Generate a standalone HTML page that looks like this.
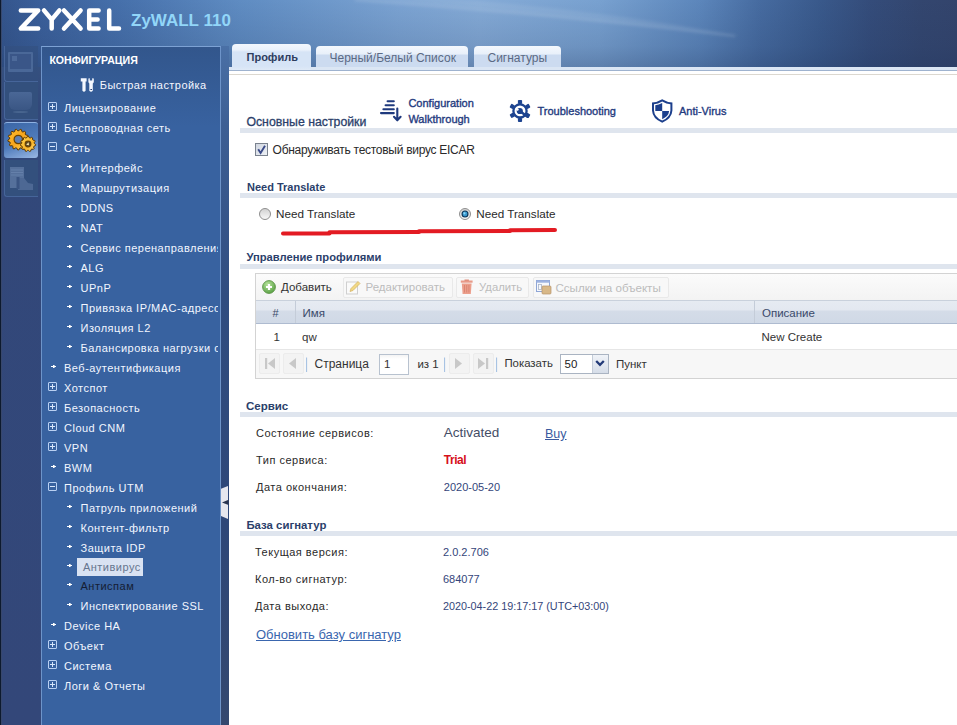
<!DOCTYPE html><html><head><meta charset='utf-8'><style>
*{margin:0;padding:0;box-sizing:border-box}
html,body{width:957px;height:725px;overflow:hidden;background:#fff;font-family:"Liberation Sans",sans-serif}
.a{position:absolute}
.t{position:absolute;line-height:1;white-space:nowrap}
</style></head><body>
<div class="a" style="left:0;top:0;width:957px;height:67px;background:linear-gradient(90deg,#34558c 0px,#3a5f9a 40px,#4670ab 120px,#5f8cc2 240px,#7ba3d2 400px,#84aad6 480px,#78a1d0 600px,#5c86bb 700px,#466ba0 760px,#39598b 820px,#344c7a 870px,#33466f 920px,#33446c 957px)"></div>
<div class="a" style="left:0;top:0;width:957px;height:67px;background:linear-gradient(180deg,rgba(30,50,90,0) 0px,rgba(30,50,90,0.06) 20px,rgba(30,50,90,0.14) 46px,rgba(30,50,90,0.3) 67px)"></div>
<svg class="a" style="left:0;top:0" width="957" height="67"><defs><filter id="bl"><feGaussianBlur stdDeviation="1.5"/></filter></defs><path d="M350 -2Q540 12 740 36Q590 8 440 -2Z" fill="rgba(255,255,255,0.08)" filter="url(#bl)"/><path d="M355 0Q540 13 735 36" stroke="rgba(255,255,255,0.12)" stroke-width="2.5" fill="none" filter="url(#bl)"/></svg>
<svg class="a" style="left:0;top:0" width="130" height="40" viewBox="0 0 130 40">
<g fill="none" stroke="#fff" stroke-width="4.5" stroke-linecap="round" stroke-linejoin="round">
<path d="M20.8 10.4H38.2L20.8 28.6H38.2"/>
<path d="M44 10.4L51.7 19.6L59.4 10.4M51.7 19.6V28.6"/>
<path d="M64 10.4L80.6 28.6M64 28.6L80.6 10.4"/>
<path d="M98.6 10.4H89.2V28.6H98.6M89.2 19.5H97.6"/>
<path d="M109.2 10.4V28.6H119"/>
</g></svg>
<div class="t" style="left:131px;top:12px;font-size:17px;color:#92d6f8;font-weight:bold;">ZyWALL 110</div>

<div class="a" style="left:0;top:67px;width:41px;height:658px;background:linear-gradient(180deg,#35507f 0px,#32487a 40px,#334779 100%)"></div>
<div class="a" style="left:0;top:0;width:1px;height:725px;background:#0d1a2e"></div><div class="a" style="left:1px;top:0;width:1px;height:725px;background:rgba(58,72,104,0.85)"></div>
<div class="a" style="left:4px;top:46px;width:34px;height:36px;background:rgba(52,80,127,0.6);border-left:1px solid #46659a;border-bottom:1px solid #46659a;border-radius:0 0 0 3px"></div>
<div class="a" style="left:8px;top:52px;width:25px;height:20px;border:2px solid #4a6898;border-bottom-width:3px;border-radius:1px;background:#3a5688"></div><div class="a" style="left:12px;top:56px;width:5px;height:5px;background:#4d6a9a"></div>
<div class="a" style="left:4px;top:82px;width:34px;height:38px;background:#33507d;border-left:1px solid #46659a;border-bottom:1px solid #46659a;border-radius:0 0 0 3px"></div>
<div class="a" style="left:9px;top:92px;width:23px;height:18px;border-radius:2px 2px 6px 6px;background:linear-gradient(180deg,#4a6796,#3a5684)"></div><div class="a" style="left:13px;top:111px;width:15px;height:2px;border-radius:50%;background:#48658f"></div>
<div class="a" style="left:4px;top:122px;width:34px;height:36px;border-radius:3px 3px 3px 3px;border-top:1px solid #8fb2e2;background:linear-gradient(160deg,#3b66a6 0%,#4f7bbb 55%,#9ab8e4 100%)"></div>
<svg class="a" style="left:0;top:115px" width="41" height="45" viewBox="0 115 41 45"><defs><linearGradient id="gg1" x1="0" y1="0" x2="1" y2="1"><stop offset="0" stop-color="#ffc030"/><stop offset="0.5" stop-color="#f7a51c"/><stop offset="1" stop-color="#ffd75a"/></linearGradient><linearGradient id="gg2" x1="0" y1="0" x2="1" y2="1"><stop offset="0" stop-color="#ffd24a"/><stop offset="0.6" stop-color="#f9b42a"/><stop offset="1" stop-color="#ffe07a"/></linearGradient></defs><path d="M28.68 140.13 L28.53 141.37 L26.64 142.10 L26.27 143.09 L27.20 144.88 L26.49 145.91 L24.48 145.68 L23.69 146.38 L23.68 148.40 L22.57 148.98 L20.90 147.84 L19.87 148.09 L18.93 149.88 L17.67 149.88 L16.73 148.09 L15.70 147.84 L14.03 148.98 L12.92 148.40 L12.91 146.38 L12.12 145.68 L10.11 145.91 L9.40 144.88 L10.33 143.09 L9.96 142.10 L8.07 141.37 L7.92 140.13 L9.58 138.97 L9.71 137.93 L8.37 136.41 L8.82 135.23 L10.82 134.98 L11.42 134.11 L10.95 132.15 L11.89 131.31 L13.78 132.02 L14.71 131.53 L15.21 129.57 L16.43 129.27 L17.77 130.78 L18.83 130.78 L20.17 129.27 L21.39 129.57 L21.89 131.53 L22.82 132.02 L24.71 131.31 L25.65 132.15 L25.18 134.11 L25.78 134.98 L27.78 135.23 L28.23 136.41 L26.89 137.93 L27.02 138.97Z" fill="url(#gg1)" stroke="#5a3600" stroke-width="1" stroke-linejoin="round"/><circle cx="18.3" cy="139.5" r="4.2" fill="#5f80b4" stroke="#6a4200" stroke-width="1.2"/><path d="M35.58 144.54 L35.43 145.62 L33.98 146.23 L33.60 147.06 L34.08 148.55 L33.37 149.37 L31.83 149.11 L31.06 149.60 L30.66 151.12 L29.62 151.43 L28.46 150.37 L27.54 150.37 L26.38 151.43 L25.34 151.12 L24.94 149.60 L24.17 149.11 L22.63 149.37 L21.92 148.55 L22.40 147.06 L22.02 146.23 L20.57 145.62 L20.42 144.54 L21.63 143.54 L21.76 142.64 L20.88 141.34 L21.33 140.36 L22.89 140.17 L23.49 139.49 L23.45 137.92 L24.36 137.33 L25.77 138.02 L26.64 137.76 L27.46 136.42 L28.54 136.42 L29.36 137.76 L30.23 138.02 L31.64 137.33 L32.55 137.92 L32.51 139.49 L33.11 140.17 L34.67 140.36 L35.12 141.34 L34.24 142.64 L34.37 143.54Z" fill="url(#gg2)" stroke="#5a3600" stroke-width="1" stroke-linejoin="round"/><circle cx="28" cy="144" r="2.8" fill="#5a4a30" stroke="#6a4200" stroke-width="1.2"/><path d="M26.2 144.8L28.6 142.2L29 145.3Z" fill="#ffe9a0"/></svg>
<div class="a" style="left:4px;top:160px;width:34px;height:37px;background:#33507d;border-left:1px solid #46659a;border-bottom:1px solid #46659a;border-radius:0 0 0 3px"></div>
<svg class="a" style="left:0;top:156px" width="41" height="44" viewBox="0 156 41 44"><rect x="10" y="167" width="14" height="21" fill="#55709b"/><path d="M11 170H23M11 172.5H23M11 175H23" stroke="#6580aa" stroke-width="1"/><path d="M18 178L24 178L28 183L33 184V190H18Z" fill="#4d6894"/><rect x="16.5" y="177" width="3" height="12" fill="#3a5482"/></svg>
<div class="a" style="left:41px;top:46px;width:180px;height:679px;background:linear-gradient(180deg,#32568c 0px,#355c96 40px,#3862a0 80px,#3862a0 100%);border:1px solid #6e94c9;border-top-color:#7da2d4;border-bottom:none"></div>
<div class="a" style="left:221px;top:46px;width:8px;height:679px;background:linear-gradient(180deg,#4a70a6 0px,#3d5f94 80px,#304d80 250px,#2e4778 480px,#34486f 100%)"></div>
<svg class="a" style="left:220px;top:484px" width="10" height="38" viewBox="220 484 10 38"><path d="M221 488.7L228 486V519L221 516Z" fill="#e6e7ee"/><path d="M222 502.4L228.5 499.8V505Z" fill="#2a3550"/></svg>
<div class="t" style="left:49.4px;top:55px;font-size:10.6px;color:#ffffff;font-weight:bold;">КОНФИГУРАЦИЯ</div>

<svg class="a" style="left:79px;top:77px" width="17" height="17" viewBox="79 77 17 17"><g fill="#f4f8ff"><path d="M80.8 78.2H86.6V81.6H85.6V90.8Q84 92.6 82.4 90.8V81.6H80.8Z"/><path d="M88.4 78.4L89.8 78.2V80.6H92.2V78.2L93.8 78.4V82.2L92.8 83.4V90.8Q91 92.6 89.3 90.8V83.4L88.4 82.2Z"/></g><rect x="90.4" y="89" width="1.6" height="1" fill="#2a4478"/></svg>
<div class="t" style="left:99.8px;top:80px;font-size:11px;color:#f4f7ff;letter-spacing:0.45px">Быстрая настройка</div>

<div class="a" style="left:42px;top:95px;width:176px;height:630px;overflow:hidden">
<div class="a" style="left:6px;top:7px;width:9px;height:9px;border:1px solid #b9d0f2;border-radius:1px"></div>
<div class="a" style="left:8px;top:11px;width:5px;height:1px;background:#d8e6fa"></div>
<div class="a" style="left:10px;top:9px;width:1px;height:5px;background:#d8e6fa"></div>
<div class="t" style="left:22px;top:8px;font-size:11px;color:#f2f6ff;letter-spacing:0.5px">Лицензирование</div>

<div class="a" style="left:6px;top:27px;width:9px;height:9px;border:1px solid #b9d0f2;border-radius:1px"></div>
<div class="a" style="left:8px;top:31px;width:5px;height:1px;background:#d8e6fa"></div>
<div class="a" style="left:10px;top:29px;width:1px;height:5px;background:#d8e6fa"></div>
<div class="t" style="left:22px;top:28px;font-size:11px;color:#f2f6ff;letter-spacing:0.5px">Беспроводная сеть</div>

<div class="a" style="left:6px;top:47px;width:9px;height:9px;border:1px solid #b9d0f2;border-radius:1px"></div>
<div class="a" style="left:8px;top:51px;width:5px;height:1px;background:#d8e6fa"></div>
<div class="t" style="left:22px;top:48px;font-size:11px;color:#f2f6ff;letter-spacing:0.5px">Сеть</div>

<svg class="a" style="left:25px;top:69px" width="6" height="5" viewBox="0 0 6 5"><rect x="0" y="2" width="5" height="1" fill="#fff"/><rect x="2" y="1" width="1" height="3" fill="#fff"/><rect x="3" y="1" width="1" height="1" fill="rgba(255,255,255,.6)"/><rect x="3" y="3" width="1" height="1" fill="rgba(255,255,255,.6)"/></svg>
<div class="t" style="left:38.5px;top:68px;font-size:11px;color:#f2f6ff;letter-spacing:0.5px">Интерфейс</div>

<svg class="a" style="left:25px;top:89px" width="6" height="5" viewBox="0 0 6 5"><rect x="0" y="2" width="5" height="1" fill="#fff"/><rect x="2" y="1" width="1" height="3" fill="#fff"/><rect x="3" y="1" width="1" height="1" fill="rgba(255,255,255,.6)"/><rect x="3" y="3" width="1" height="1" fill="rgba(255,255,255,.6)"/></svg>
<div class="t" style="left:38.5px;top:88px;font-size:11px;color:#f2f6ff;letter-spacing:0.5px">Маршрутизация</div>

<svg class="a" style="left:25px;top:109px" width="6" height="5" viewBox="0 0 6 5"><rect x="0" y="2" width="5" height="1" fill="#fff"/><rect x="2" y="1" width="1" height="3" fill="#fff"/><rect x="3" y="1" width="1" height="1" fill="rgba(255,255,255,.6)"/><rect x="3" y="3" width="1" height="1" fill="rgba(255,255,255,.6)"/></svg>
<div class="t" style="left:38.5px;top:108px;font-size:11px;color:#f2f6ff;letter-spacing:0.5px">DDNS</div>

<svg class="a" style="left:25px;top:129px" width="6" height="5" viewBox="0 0 6 5"><rect x="0" y="2" width="5" height="1" fill="#fff"/><rect x="2" y="1" width="1" height="3" fill="#fff"/><rect x="3" y="1" width="1" height="1" fill="rgba(255,255,255,.6)"/><rect x="3" y="3" width="1" height="1" fill="rgba(255,255,255,.6)"/></svg>
<div class="t" style="left:38.5px;top:128px;font-size:11px;color:#f2f6ff;letter-spacing:0.5px">NAT</div>

<svg class="a" style="left:25px;top:149px" width="6" height="5" viewBox="0 0 6 5"><rect x="0" y="2" width="5" height="1" fill="#fff"/><rect x="2" y="1" width="1" height="3" fill="#fff"/><rect x="3" y="1" width="1" height="1" fill="rgba(255,255,255,.6)"/><rect x="3" y="3" width="1" height="1" fill="rgba(255,255,255,.6)"/></svg>
<div class="t" style="left:38.5px;top:148px;font-size:11px;color:#f2f6ff;letter-spacing:0.5px">Сервис перенаправления</div>

<svg class="a" style="left:25px;top:169px" width="6" height="5" viewBox="0 0 6 5"><rect x="0" y="2" width="5" height="1" fill="#fff"/><rect x="2" y="1" width="1" height="3" fill="#fff"/><rect x="3" y="1" width="1" height="1" fill="rgba(255,255,255,.6)"/><rect x="3" y="3" width="1" height="1" fill="rgba(255,255,255,.6)"/></svg>
<div class="t" style="left:38.5px;top:168px;font-size:11px;color:#f2f6ff;letter-spacing:0.5px">ALG</div>

<svg class="a" style="left:25px;top:189px" width="6" height="5" viewBox="0 0 6 5"><rect x="0" y="2" width="5" height="1" fill="#fff"/><rect x="2" y="1" width="1" height="3" fill="#fff"/><rect x="3" y="1" width="1" height="1" fill="rgba(255,255,255,.6)"/><rect x="3" y="3" width="1" height="1" fill="rgba(255,255,255,.6)"/></svg>
<div class="t" style="left:38.5px;top:188px;font-size:11px;color:#f2f6ff;letter-spacing:0.5px">UPnP</div>

<svg class="a" style="left:25px;top:209px" width="6" height="5" viewBox="0 0 6 5"><rect x="0" y="2" width="5" height="1" fill="#fff"/><rect x="2" y="1" width="1" height="3" fill="#fff"/><rect x="3" y="1" width="1" height="1" fill="rgba(255,255,255,.6)"/><rect x="3" y="3" width="1" height="1" fill="rgba(255,255,255,.6)"/></svg>
<div class="t" style="left:38.5px;top:208px;font-size:11px;color:#f2f6ff;letter-spacing:0.5px">Привязка IP/MAC-адресов</div>

<svg class="a" style="left:25px;top:229px" width="6" height="5" viewBox="0 0 6 5"><rect x="0" y="2" width="5" height="1" fill="#fff"/><rect x="2" y="1" width="1" height="3" fill="#fff"/><rect x="3" y="1" width="1" height="1" fill="rgba(255,255,255,.6)"/><rect x="3" y="3" width="1" height="1" fill="rgba(255,255,255,.6)"/></svg>
<div class="t" style="left:38.5px;top:228px;font-size:11px;color:#f2f6ff;letter-spacing:0.5px">Изоляция L2</div>

<svg class="a" style="left:25px;top:249px" width="6" height="5" viewBox="0 0 6 5"><rect x="0" y="2" width="5" height="1" fill="#fff"/><rect x="2" y="1" width="1" height="3" fill="#fff"/><rect x="3" y="1" width="1" height="1" fill="rgba(255,255,255,.6)"/><rect x="3" y="3" width="1" height="1" fill="rgba(255,255,255,.6)"/></svg>
<div class="t" style="left:38.5px;top:248px;font-size:11px;color:#f2f6ff;letter-spacing:0.5px">Балансировка нагрузки сети</div>

<svg class="a" style="left:9px;top:269px" width="6" height="5" viewBox="0 0 6 5"><rect x="0" y="2" width="5" height="1" fill="#fff"/><rect x="2" y="1" width="1" height="3" fill="#fff"/><rect x="3" y="1" width="1" height="1" fill="rgba(255,255,255,.6)"/><rect x="3" y="3" width="1" height="1" fill="rgba(255,255,255,.6)"/></svg>
<div class="t" style="left:22px;top:268px;font-size:11px;color:#f2f6ff;letter-spacing:0.5px">Веб-аутентификация</div>

<div class="a" style="left:6px;top:287px;width:9px;height:9px;border:1px solid #b9d0f2;border-radius:1px"></div>
<div class="a" style="left:8px;top:291px;width:5px;height:1px;background:#d8e6fa"></div>
<div class="a" style="left:10px;top:289px;width:1px;height:5px;background:#d8e6fa"></div>
<div class="t" style="left:22px;top:288px;font-size:11px;color:#f2f6ff;letter-spacing:0.5px">Хотспот</div>

<div class="a" style="left:6px;top:307px;width:9px;height:9px;border:1px solid #b9d0f2;border-radius:1px"></div>
<div class="a" style="left:8px;top:311px;width:5px;height:1px;background:#d8e6fa"></div>
<div class="a" style="left:10px;top:309px;width:1px;height:5px;background:#d8e6fa"></div>
<div class="t" style="left:22px;top:308px;font-size:11px;color:#f2f6ff;letter-spacing:0.5px">Безопасность</div>

<div class="a" style="left:6px;top:327px;width:9px;height:9px;border:1px solid #b9d0f2;border-radius:1px"></div>
<div class="a" style="left:8px;top:331px;width:5px;height:1px;background:#d8e6fa"></div>
<div class="a" style="left:10px;top:329px;width:1px;height:5px;background:#d8e6fa"></div>
<div class="t" style="left:22px;top:328px;font-size:11px;color:#f2f6ff;letter-spacing:0.5px">Cloud CNM</div>

<div class="a" style="left:6px;top:347px;width:9px;height:9px;border:1px solid #b9d0f2;border-radius:1px"></div>
<div class="a" style="left:8px;top:351px;width:5px;height:1px;background:#d8e6fa"></div>
<div class="a" style="left:10px;top:349px;width:1px;height:5px;background:#d8e6fa"></div>
<div class="t" style="left:22px;top:348px;font-size:11px;color:#f2f6ff;letter-spacing:0.5px">VPN</div>

<svg class="a" style="left:9px;top:369px" width="6" height="5" viewBox="0 0 6 5"><rect x="0" y="2" width="5" height="1" fill="#fff"/><rect x="2" y="1" width="1" height="3" fill="#fff"/><rect x="3" y="1" width="1" height="1" fill="rgba(255,255,255,.6)"/><rect x="3" y="3" width="1" height="1" fill="rgba(255,255,255,.6)"/></svg>
<div class="t" style="left:22px;top:368px;font-size:11px;color:#f2f6ff;letter-spacing:0.5px">BWM</div>

<div class="a" style="left:6px;top:387px;width:9px;height:9px;border:1px solid #b9d0f2;border-radius:1px"></div>
<div class="a" style="left:8px;top:391px;width:5px;height:1px;background:#d8e6fa"></div>
<div class="t" style="left:22px;top:388px;font-size:11px;color:#f2f6ff;letter-spacing:0.5px">Профиль UTM</div>

<svg class="a" style="left:25px;top:409px" width="6" height="5" viewBox="0 0 6 5"><rect x="0" y="2" width="5" height="1" fill="#fff"/><rect x="2" y="1" width="1" height="3" fill="#fff"/><rect x="3" y="1" width="1" height="1" fill="rgba(255,255,255,.6)"/><rect x="3" y="3" width="1" height="1" fill="rgba(255,255,255,.6)"/></svg>
<div class="t" style="left:38.5px;top:408px;font-size:11px;color:#f2f6ff;letter-spacing:0.5px">Патруль приложений</div>

<svg class="a" style="left:25px;top:429px" width="6" height="5" viewBox="0 0 6 5"><rect x="0" y="2" width="5" height="1" fill="#fff"/><rect x="2" y="1" width="1" height="3" fill="#fff"/><rect x="3" y="1" width="1" height="1" fill="rgba(255,255,255,.6)"/><rect x="3" y="3" width="1" height="1" fill="rgba(255,255,255,.6)"/></svg>
<div class="t" style="left:38.5px;top:428px;font-size:11px;color:#f2f6ff;letter-spacing:0.5px">Контент-фильтр</div>

<svg class="a" style="left:25px;top:449px" width="6" height="5" viewBox="0 0 6 5"><rect x="0" y="2" width="5" height="1" fill="#fff"/><rect x="2" y="1" width="1" height="3" fill="#fff"/><rect x="3" y="1" width="1" height="1" fill="rgba(255,255,255,.6)"/><rect x="3" y="3" width="1" height="1" fill="rgba(255,255,255,.6)"/></svg>
<div class="t" style="left:38.5px;top:448px;font-size:11px;color:#f2f6ff;letter-spacing:0.5px">Защита IDP</div>

<svg class="a" style="left:25px;top:468px" width="6" height="5" viewBox="0 0 6 5"><rect x="0" y="2" width="5" height="1" fill="#fff"/><rect x="2" y="1" width="1" height="3" fill="#fff"/><rect x="3" y="1" width="1" height="1" fill="rgba(255,255,255,.6)"/><rect x="3" y="3" width="1" height="1" fill="rgba(255,255,255,.6)"/></svg>
<div class="a" style="left:35px;top:463px;width:66px;height:18px;background:#d9e2f2"></div>
<div class="t" style="left:40.9px;top:467px;font-size:11px;color:#66758e;letter-spacing:0.5px">Антивирус</div>

<svg class="a" style="left:25px;top:487px" width="6" height="5" viewBox="0 0 6 5"><rect x="0" y="2" width="5" height="1" fill="#fff"/><rect x="2" y="1" width="1" height="3" fill="#fff"/><rect x="3" y="1" width="1" height="1" fill="rgba(255,255,255,.6)"/><rect x="3" y="3" width="1" height="1" fill="rgba(255,255,255,.6)"/></svg>
<div class="t" style="left:38.5px;top:486px;font-size:11px;color:#151d33;letter-spacing:0.5px">Антиспам</div>

<svg class="a" style="left:25px;top:507px" width="6" height="5" viewBox="0 0 6 5"><rect x="0" y="2" width="5" height="1" fill="#fff"/><rect x="2" y="1" width="1" height="3" fill="#fff"/><rect x="3" y="1" width="1" height="1" fill="rgba(255,255,255,.6)"/><rect x="3" y="3" width="1" height="1" fill="rgba(255,255,255,.6)"/></svg>
<div class="t" style="left:38.5px;top:506px;font-size:11px;color:#f2f6ff;letter-spacing:0.5px">Инспектирование SSL</div>

<svg class="a" style="left:9px;top:527px" width="6" height="5" viewBox="0 0 6 5"><rect x="0" y="2" width="5" height="1" fill="#fff"/><rect x="2" y="1" width="1" height="3" fill="#fff"/><rect x="3" y="1" width="1" height="1" fill="rgba(255,255,255,.6)"/><rect x="3" y="3" width="1" height="1" fill="rgba(255,255,255,.6)"/></svg>
<div class="t" style="left:22px;top:526px;font-size:11px;color:#f2f6ff;letter-spacing:0.5px">Device HA</div>

<div class="a" style="left:6px;top:545px;width:9px;height:9px;border:1px solid #b9d0f2;border-radius:1px"></div>
<div class="a" style="left:8px;top:549px;width:5px;height:1px;background:#d8e6fa"></div>
<div class="a" style="left:10px;top:547px;width:1px;height:5px;background:#d8e6fa"></div>
<div class="t" style="left:22px;top:546px;font-size:11px;color:#f2f6ff;letter-spacing:0.5px">Объект</div>

<div class="a" style="left:6px;top:565px;width:9px;height:9px;border:1px solid #b9d0f2;border-radius:1px"></div>
<div class="a" style="left:8px;top:569px;width:5px;height:1px;background:#d8e6fa"></div>
<div class="a" style="left:10px;top:567px;width:1px;height:5px;background:#d8e6fa"></div>
<div class="t" style="left:22px;top:566px;font-size:11px;color:#f2f6ff;letter-spacing:0.5px">Система</div>

<div class="a" style="left:6px;top:585px;width:9px;height:9px;border:1px solid #b9d0f2;border-radius:1px"></div>
<div class="a" style="left:8px;top:589px;width:5px;height:1px;background:#d8e6fa"></div>
<div class="a" style="left:10px;top:587px;width:1px;height:5px;background:#d8e6fa"></div>
<div class="t" style="left:22px;top:586px;font-size:11px;color:#f2f6ff;letter-spacing:0.5px">Логи &amp; Отчеты</div>

</div>
<div class="a" style="left:229px;top:67px;width:728px;height:658px;background:#fff"></div>
<div class="a" style="left:229px;top:67px;width:728px;height:3px;background:#dbe6f4"></div>
<div class="a" style="left:229px;top:70px;width:728px;height:1px;background:#9fb3cf"></div>
<div class="a" style="left:229px;top:74px;width:728px;height:1px;background:#dcd8d0"></div>
<div class="a" style="left:232px;top:44px;width:79px;height:26px;border-radius:4px 4px 0 0;background:linear-gradient(180deg,#f2f7fd 0,#e9f1fb 6px,#d6e4f6 8px,#d6e4f6 22px,#dfeaf7 100%)"></div>
<div class="t" style="left:246.5px;top:52px;font-size:11px;color:#2d3d5e;font-weight:bold;">Профиль</div>

<div class="a" style="left:316px;top:46px;width:152px;height:21px;border-radius:4px 4px 0 0;background:linear-gradient(180deg,#f4f8fd 0,#e8f0fa 8px,#ccdbf0 9px,#ccdbf0 100%)"></div>
<div class="t" style="left:329.5px;top:52px;font-size:12px;color:#5b6a84;">Черный/Белый Список</div>

<div class="a" style="left:474px;top:46px;width:87px;height:21px;border-radius:4px 4px 0 0;background:linear-gradient(180deg,#f4f8fd 0,#e8f0fa 8px,#ccdbf0 9px,#ccdbf0 100%)"></div>
<div class="t" style="left:487.5px;top:52px;font-size:12px;color:#5b6a84;">Сигнатуры</div>

<svg class="a" style="left:378px;top:97px" width="26" height="27" viewBox="378 97 26 27"><g stroke="#1f3a7e" stroke-width="2.1" stroke-linecap="round" fill="none">
<path d="M387.6 101.2H393.8M385.6 105.2H393.8M383.4 109.3H393.8M381 113.1H393.8"/>
<path d="M397.3 108.5V120M394 116.8L397.3 120.3L400.6 116.8" stroke-linejoin="round"/></g></svg>
<div class="t" style="left:408.4px;top:98px;font-size:11px;color:#1f3a7e;-webkit-text-stroke:0.35px #1f3a7e">Configuration</div>

<div class="t" style="left:408.4px;top:114px;font-size:11px;color:#1f3a7e;-webkit-text-stroke:0.35px #1f3a7e">Walkthrough</div>

<svg class="a" style="left:506px;top:97px" width="28" height="28" viewBox="506 97 28 28"><g fill="#1d4490"><rect x="517.90" y="99.90" width="4.2" height="4" rx="0.9" transform="rotate(0 520.00 101.90)" /><rect x="525.69" y="104.40" width="4.2" height="4" rx="0.9" transform="rotate(60 527.79 106.40)" /><rect x="525.69" y="113.40" width="4.2" height="4" rx="0.9" transform="rotate(120 527.79 115.40)" /><rect x="517.90" y="117.90" width="4.2" height="4" rx="0.9" transform="rotate(180 520.00 119.90)" /><rect x="510.11" y="113.40" width="4.2" height="4" rx="0.9" transform="rotate(240 512.21 115.40)" /><rect x="510.11" y="104.40" width="4.2" height="4" rx="0.9" transform="rotate(300 512.21 106.40)" /></g>
<circle cx="520" cy="110.9" r="6.6" fill="none" stroke="#1d4490" stroke-width="2.3"/>
<circle cx="519.8" cy="111" r="3.1" fill="#1d4490"/>
<path d="M520.5 111.6L527.5 116.8" stroke="#1d4490" stroke-width="2.5" stroke-linecap="round"/>
<path d="M515.8 108.2L518.4 110.2" stroke="#fff" stroke-width="1.8"/></svg>
<div class="t" style="left:537.5px;top:106px;font-size:11px;color:#1f3a7e;-webkit-text-stroke:0.35px #1f3a7e">Troubleshooting</div>

<svg class="a" style="left:650px;top:97px" width="25" height="28" viewBox="650 97 25 28">
<path d="M662.2 99.2Q667 102.2 672.4 102.4V110.5Q672 118.5 662.2 122.8Q652.4 118.5 652 110.5V102.4Q657.4 102.2 662.2 99.2Z" fill="#1c3f8c"/>
<path d="M662.2 101.5Q666.5 104 670.4 104.2V110.5Q670 117.2 662.2 120.6Q654.4 117.2 654 110.5V104.2Q657.9 104 662.2 101.5Z" fill="#fff"/>
<path d="M662.2 103Q658.6 105.1 655.3 105.3V111.1H662.2Z" fill="#1c3f8c"/>
<path d="M662.2 111.1H669.1Q668.6 116.5 662.2 119.2Z" fill="#1c3f8c"/>
</svg>
<div class="t" style="left:679px;top:106px;font-size:11px;color:#1f3a7e;-webkit-text-stroke:0.35px #1f3a7e">Anti-Virus</div>

<div class="t" style="left:246.4px;top:116px;font-size:12.3px;color:#2b3f6b;-webkit-text-stroke:0.3px #2b3f6b">Основные настройки</div>

<div class="a" style="left:240px;top:128px;width:717px;height:5px;background:#dfe5ee"></div>
<div class="a" style="left:255px;top:143px;width:13px;height:13px;border:1px solid #7a828e;background:linear-gradient(135deg,#d0d6e0,#eef1f6)"></div>
<svg class="a" style="left:255px;top:143px" width="13" height="13" viewBox="0 0 13 13"><path d="M3.2 6.2L5.6 10L10 2.8" stroke="#3a4a88" stroke-width="1.9" fill="none"/></svg>
<div class="t" style="left:272.6px;top:144px;font-size:12px;color:#2a2a2a;letter-spacing:-0.28px">Обнаруживать тестовый вирус EICAR</div>

<div class="t" style="left:247px;top:182px;font-size:11px;color:#2b3f6b;font-weight:bold;">Need Translate</div>

<div class="a" style="left:240px;top:193px;width:717px;height:5px;background:#dfe5ee"></div>
<svg class="a" style="left:259px;top:208px" width="12" height="12" viewBox="0 0 12 12"><defs><linearGradient id="rg259" x1="0" y1="0" x2="0" y2="1"><stop offset="0" stop-color="#d0d0d0"/><stop offset="1" stop-color="#fafafa"/></linearGradient></defs><circle cx="6" cy="6" r="5.5" fill="url(#rg259)" stroke="#8e8e8e" stroke-width="1"/></svg>
<div class="t" style="left:276px;top:208px;font-size:11.7px;color:#2a2a2a;">Need Translate</div>

<svg class="a" style="left:459px;top:208px" width="12" height="12" viewBox="0 0 12 12"><defs><linearGradient id="rg459" x1="0" y1="0" x2="0" y2="1"><stop offset="0" stop-color="#d0d0d0"/><stop offset="1" stop-color="#fafafa"/></linearGradient></defs><circle cx="6" cy="6" r="5.5" fill="url(#rg459)" stroke="#8e8e8e" stroke-width="1"/><circle cx="6" cy="6" r="3.5" fill="#0f3558"/><circle cx="6" cy="6" r="2.4" fill="#3a9ad0"/><circle cx="5.4" cy="5.3" r="1.1" fill="#8fd6f6"/></svg>
<div class="t" style="left:476.3px;top:208px;font-size:11.7px;color:#2a2a2a;">Need Translate</div>

<svg class="a" style="left:278px;top:224px" width="284" height="14" viewBox="278 224 284 14"><g stroke="#e31b23" stroke-width="4" stroke-linecap="round" fill="none"><path d="M283 233.6L329.5 233.4"/><path d="M329.5 232.2L419 232"/><path d="M419 231.2L510 231"/><path d="M510 230.3L555 230.1"/></g></svg>
<div class="t" style="left:246.4px;top:252px;font-size:11.2px;color:#2b3f6b;font-weight:bold;">Управление профилями</div>

<div class="a" style="left:240px;top:264px;width:717px;height:5px;background:#dfe5ee"></div>
<div class="a" style="left:255px;top:273px;width:710px;height:106px;border:1px solid #d3d3d3;background:#fff"></div>
<div class="a" style="left:256px;top:274px;width:701px;height:26px;background:linear-gradient(180deg,#fbfbfb,#f3f3f3)"></div>
<div class="a" style="left:342.5px;top:277px;width:110px;height:21px;border:1px solid #e9e9e9;border-radius:2px;background:#f8f8f8"></div>
<div class="a" style="left:456.4px;top:277px;width:73px;height:21px;border:1px solid #e9e9e9;border-radius:2px;background:#f8f8f8"></div>
<div class="a" style="left:532.7px;top:277px;width:136px;height:21px;border:1px solid #e9e9e9;border-radius:2px;background:#f8f8f8"></div>
<svg class="a" style="left:261px;top:280px" width="16" height="15" viewBox="261 280 16 15"><defs><radialGradient id="ga" cx="0.4" cy="0.3" r="0.8"><stop offset="0" stop-color="#b6e39a"/><stop offset="1" stop-color="#4f9a3c"/></radialGradient></defs><circle cx="269" cy="287" r="6.4" fill="url(#ga)" stroke="#5d9447" stroke-width="0.9"/><path d="M266 287H272M269 284V290" stroke="#fff" stroke-width="2.2"/></svg>
<div class="t" style="left:281px;top:282px;font-size:11.5px;color:#333;">Добавить</div>

<svg class="a" style="left:345px;top:280px" width="17" height="16" viewBox="345 280 17 16"><rect x="346.5" y="282" width="11" height="12" fill="#fafafa" stroke="#cfcfcf"/><path d="M350 291.5L351 288.5L358 281.5L360 283.5L353 290.5Z" fill="#f1d985" stroke="#d4b060" stroke-width="0.7"/></svg>
<div class="t" style="left:365.5px;top:282px;font-size:11.5px;color:#bcbcbc;">Редактировать</div>

<svg class="a" style="left:459px;top:279px" width="15" height="16" viewBox="459 279 15 16"><rect x="460.8" y="280.5" width="11.8" height="2.2" fill="#e89a88"/><rect x="464.5" y="279.5" width="4.4" height="1.5" fill="#e0907e"/><path d="M461.8 283.5H471.6L470.8 294H462.6Z" fill="#ec9f8c"/><path d="M464.5 285V292.5M466.7 285V292.5M468.9 285V292.5" stroke="#d57f6c" stroke-width="0.8"/></svg>
<div class="t" style="left:479px;top:282px;font-size:11.3px;color:#bcbcbc;">Удалить</div>

<svg class="a" style="left:535px;top:279px" width="18" height="17" viewBox="535 279 18 17"><rect x="536.5" y="280.5" width="13" height="11" fill="#f6f8fc" stroke="#8fa6d6"/><rect x="536.5" y="280.5" width="13" height="2.2" fill="#9db2e0"/><rect x="538.5" y="284.5" width="3" height="5" fill="none" stroke="#a8b4c8" stroke-width="0.8"/><rect x="542" y="286" width="9" height="8" rx="1" fill="#d8b888" stroke="#b8946a" stroke-width="0.7"/></svg>
<div class="t" style="left:555.4px;top:282px;font-size:11.6px;color:#bcbcbc;">Ссылки на объекты</div>

<div class="a" style="left:256px;top:300px;width:701px;height:24px;border-top:1px solid #c9d1dc;border-bottom:1px solid #aebbd0;background:linear-gradient(180deg,#e6ebf2 0,#e3e8f0 9px,#d4dce8 10px,#d0d9e6 100%)"></div>
<div class="a" style="left:295px;top:301px;width:1px;height:22px;background:#c4ccd8"></div>
<div class="a" style="left:754px;top:301px;width:1px;height:22px;background:#c4ccd8"></div>
<div class="t" style="left:272.6px;top:308px;font-size:11px;color:#3a4a6a;">#</div>

<div class="t" style="left:302.5px;top:308px;font-size:11.5px;color:#3a4a6a;">Имя</div>

<div class="t" style="left:762px;top:308px;font-size:11.5px;color:#3a4a6a;">Описание</div>

<div class="t" style="left:273.5px;top:332px;font-size:11.5px;color:#333;">1</div>

<div class="t" style="left:302px;top:332px;font-size:11.5px;color:#333;">qw</div>

<div class="t" style="left:761.5px;top:332px;font-size:11.5px;color:#333;">New Create</div>

<div class="a" style="left:256px;top:349px;width:701px;height:29px;border-top:1px solid #e6e6e6;background:#f7f7f7"></div>
<div class="a" style="left:259px;top:353px;width:21px;height:21px;border:1px solid #ececec;border-radius:2px;background:#f3f3f3"></div>
<div class="a" style="left:282.6px;top:353px;width:21px;height:21px;border:1px solid #ececec;border-radius:2px;background:#f3f3f3"></div>
<div class="a" style="left:448.5px;top:353px;width:21px;height:21px;border:1px solid #ececec;border-radius:2px;background:#f3f3f3"></div>
<div class="a" style="left:472.6px;top:353px;width:21px;height:21px;border:1px solid #ececec;border-radius:2px;background:#f3f3f3"></div>
<svg class="a" style="left:259px;top:353px" width="240" height="21" viewBox="259 353 240 21"><g fill="#c8c8c8"><rect x="265" y="358" width="2.2" height="11"/><path d="M275 358V369L268 363.5Z"/><path d="M296 358V369L289 363.5Z"/><path d="M455 358V369L462 363.5Z"/><path d="M478 358V369L485 363.5Z"/><rect x="486" y="358" width="2.2" height="11"/></g>
<path d="M306.6 357.5V372M444.6 357.5V372M496.6 357.5V372" stroke="#9fbde0" stroke-width="1"/></svg>
<div class="t" style="left:314.5px;top:358px;font-size:12px;color:#333;">Страница</div>

<div class="a" style="left:379px;top:353.5px;width:30px;height:21px;border:1px solid #b8c2cf;background:linear-gradient(180deg,#f4f4f4,#fff 4px)"></div>
<div class="t" style="left:384px;top:359px;font-size:11.5px;color:#333;">1</div>

<div class="t" style="left:417.4px;top:359px;font-size:11.5px;color:#333;">из 1</div>

<div class="t" style="left:504.4px;top:358px;font-size:11.4px;color:#333;">Показать</div>

<div class="a" style="left:560px;top:354px;width:49px;height:20px;border:1px solid #aab4c2;background:#fff"></div>
<div class="a" style="left:592px;top:355px;width:16px;height:18px;border-left:1px solid #c4ccd8;background:linear-gradient(180deg,#f0f3f8,#d6dde8)"></div>
<svg class="a" style="left:594px;top:358px" width="12" height="10" viewBox="0 0 12 10"><path d="M2.2 3L6 6.8L9.8 3" stroke="#233a78" stroke-width="2.3" fill="none"/></svg>
<div class="t" style="left:564.5px;top:359px;font-size:11.5px;color:#222;">50</div>

<div class="t" style="left:616px;top:359px;font-size:11.5px;color:#333;">Пункт</div>

<div class="t" style="left:246px;top:401px;font-size:11.5px;color:#2b3f6b;font-weight:bold;">Сервис</div>

<div class="a" style="left:240px;top:412px;width:717px;height:5px;background:#dfe5ee"></div>
<div class="t" style="left:256px;top:428px;font-size:11px;color:#2a2a2a;letter-spacing:0.5px">Состояние сервисов:</div>

<div class="t" style="left:443.8px;top:426px;font-size:13.5px;color:#444d66;">Activated</div>

<div class="t" style="left:545px;top:428px;font-size:12.5px;color:#3a5a9e;text-decoration:underline">Buy</div>

<div class="t" style="left:256px;top:455px;font-size:11px;color:#2a2a2a;letter-spacing:0.5px">Тип сервиса:</div>

<div class="t" style="left:443.8px;top:454px;font-size:12px;color:#d6101c;font-weight:bold;letter-spacing:-0.45px">Trial</div>

<div class="t" style="left:256px;top:482px;font-size:11px;color:#2a2a2a;letter-spacing:0.5px">Дата окончания:</div>

<div class="t" style="left:443.8px;top:482px;font-size:11px;color:#34457a;">2020-05-20</div>

<div class="t" style="left:246.4px;top:520px;font-size:11.4px;color:#2b3f6b;font-weight:bold;">База сигнатур</div>

<div class="a" style="left:240px;top:531px;width:717px;height:5px;background:#dfe5ee"></div>
<div class="t" style="left:255px;top:547px;font-size:11px;color:#2a2a2a;letter-spacing:0.5px">Текущая версия:</div>

<div class="t" style="left:443px;top:547px;font-size:11px;color:#34457a;">2.0.2.706</div>

<div class="t" style="left:255px;top:574px;font-size:11px;color:#2a2a2a;letter-spacing:0.5px">Кол-во сигнатур:</div>

<div class="t" style="left:443px;top:574px;font-size:11px;color:#34457a;">684077</div>

<div class="t" style="left:255px;top:601px;font-size:11px;color:#2a2a2a;letter-spacing:0.5px">Дата выхода:</div>

<div class="t" style="left:443px;top:601px;font-size:10.8px;color:#34457a;">2020-04-22 19:17:17 (UTC+03:00)</div>

<div class="t" style="left:256px;top:628px;font-size:13px;color:#3a66ae;text-decoration:underline">Обновить базу сигнатур</div>

</body></html>
